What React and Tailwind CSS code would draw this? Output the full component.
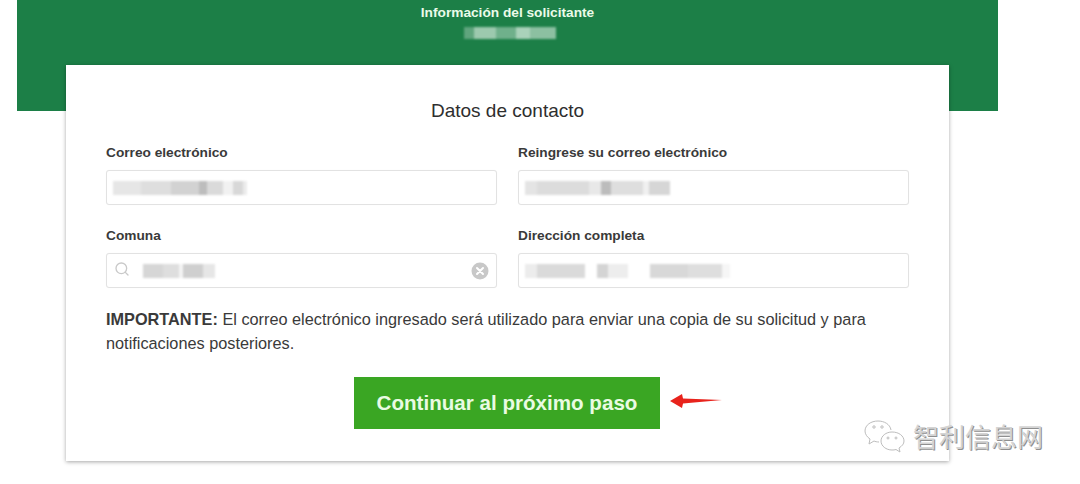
import { Search } from 'lucide-react';

const font = { fontFamily: '"Liberation Sans", "Noto Sans CJK SC", sans-serif' };

// pixelated censor blur, [width, tailwind colour class]
const Blur = ({ blocks }) => (
  <div className="flex items-center h-[20px] blur-[1px]">
    {blocks.map(([w, c], i) => (
      <div key={i} className={`h-[14px] ${c}`} style={{ width: w }} />
    ))}
  </div>
);

const Field = ({ label, blocks, search }) => (
  <div>
    <label className="block text-[13.7px] leading-[16px] font-bold text-[#3a3a3a] mb-[9px]">{label}</label>
    <div className="flex items-center h-[35px] border border-[#e2e2e2] rounded-[3px] bg-white px-[6px] shadow-[0_0_1px_rgba(0,0,0,0.06)]">
      {search && <Search className="w-[16px] h-[16px] text-[#c9c9c9] ml-[1px] mr-[13px] -mt-[3px]" strokeWidth={2} />}
      <Blur blocks={blocks} />
      {search && (
        <svg className="ml-auto mr-[1px]" width="18" height="18" viewBox="0 0 18 18">
          <circle cx="9" cy="9" r="8.5" fill="#c8c8c8" />
          <path d="M6 6l6 6M12 6l-6 6" stroke="#fff" strokeWidth="2" strokeLinecap="round" />
        </svg>
      )}
    </div>
  </div>
);

const email1 = [[28, 'bg-[#e6e6e6]'], [30, 'bg-[#dedede]'], [28, 'bg-[#d2d2d2]'], [8, 'bg-[#bdbdbd]'], [16, 'bg-[#dadada]'], [10, 'bg-[#f1f1f1]'], [10, 'bg-[#d8d8d8]'], [4, 'bg-[#ececec]']];
const email2 = [[12, 'bg-[#e4e4e4]'], [52, 'bg-[#dcdcdc]'], [12, 'bg-[#e8e8e8]'], [10, 'bg-[#bcbcbc]'], [32, 'bg-[#dedede]'], [6, 'bg-[#f0f0f0]'], [21, 'bg-[#d6d6d6]']];
const comuna = [[20, 'bg-[#d6d6d6]'], [16, 'bg-[#dedede]'], [4, 'bg-[#f4f4f4]'], [20, 'bg-[#cfcfcf]'], [12, 'bg-[#e6e6e6]']];
const direccion = [[12, 'bg-[#ececec]'], [48, 'bg-[#dadada]'], [12, 'bg-white'], [11, 'bg-[#d4d4d4]'], [20, 'bg-[#ededed]'], [22, 'bg-white'], [38, 'bg-[#d8d8d8]'], [34, 'bg-[#dedede]'], [8, 'bg-[#f6f6f6]']];

export default function App() {
  return (
    <div className="relative w-[1080px] h-[484px] bg-white overflow-hidden" style={font}>
      <div className="ml-[17px] w-[981px] h-[111px] bg-[#1c7f47] pt-[5px] text-center">
        <div className="text-[13.7px] leading-[16px] font-bold text-[#eafbe9]">Información del solicitante</div>
        <div className="flex justify-center mt-[6px] ml-[5px]">
          <div className="flex h-[12px] w-[92px] blur-[1px]">
            <div className="w-[10px] bg-[#5fa57d]" />
            <div className="w-[22px] bg-[#9cc9ae]" />
            <div className="w-[20px] bg-[#6fb08b]" />
            <div className="w-[14px] bg-[#a9d2ba]" />
            <div className="w-[26px] bg-[#8cc0a1]" />
          </div>
        </div>
      </div>

      <div className="relative ml-[66px] w-[883px] h-[396px] -mt-[46px] bg-white px-[40px] pt-[35px] shadow-[0_1px_4px_rgba(0,0,0,0.35)]">
        <h2 className="text-[19px] leading-[22px] text-center text-[#2e2e2e]">Datos de contacto</h2>
        <div className="grid grid-cols-2 gap-x-[21px] gap-y-[23px] mt-[23px]">
          <Field label="Correo electrónico" blocks={email1} />
          <Field label="Reingrese su correo electrónico" blocks={email2} />
          <Field label="Comuna" blocks={comuna} search />
          <Field label="Dirección completa" blocks={direccion} />
        </div>
        <p className="mt-[19px] text-[16.3px] leading-[24px] text-[#3a3a3a]">
          <b>IMPORTANTE:</b> El correo electrónico ingresado será utilizado para enviar una copia de su solicitud y para notificaciones posteriores.
        </p>
        <div className="flex justify-center mt-[22px] pr-[1px]">
          <button className="w-[306px] h-[52px] bg-[#3aa623] text-[20.6px] font-bold text-[#e9fbe2]">Continuar al próximo paso</button>
        </div>
      </div>

      {/* red arrow annotation */}
      <svg className="absolute left-[668px] top-[392px]" width="56" height="18" viewBox="0 0 56 18">
        <path d="M2 9L14 2L15 6.5L54 8L15 11.5L14 16Z" fill="#e8231c" />
      </svg>

      {/* watermark */}
      <div className="absolute left-[862px] top-[419px] flex items-center">
        <svg width="46" height="34" viewBox="0 0 46 34" fill="none" stroke="#bdbdbd" strokeWidth="1">
          <path d="M17 23c-2 0-4-.5-5-1l-5 3 1-5c-3-2-5-5-5-8 0-6 6-10 13-10 6 0 12 3 13 9" fill="#fff" />
          <circle cx="12" cy="8" r="1.2" />
          <circle cx="20" cy="8" r="1.2" />
          <path d="M30 13c-6 0-11 4-11 9s5 9 11 9c1 0 3 0 4-.5l4 2.5-1-4c3-2 5-4 5-7 0-5-5-9-12-9z" fill="#fff" />
          <circle cx="26" cy="19" r="1" />
          <circle cx="34" cy="19" r="1" />
        </svg>
        <span className="ml-[5px] text-[26px] leading-[34px] text-[#d4d4d4] [text-shadow:1px_1px_0_#8f8f8f]" style={{ fontFamily: '"Noto Sans CJK SC", sans-serif' }}>智利信息网</span>
      </div>
    </div>
  );
}
